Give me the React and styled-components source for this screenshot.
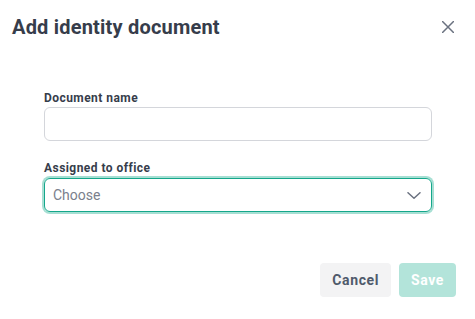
import React from "react";
import styled, { createGlobalStyle } from "styled-components";

const Global = createGlobalStyle`
  html, body { margin: 0; padding: 0; background: #ffffff; }
  body { font-family: Roboto, "Noto Sans", Arial, sans-serif; }
  * { box-sizing: border-box; }
`;

const Modal = styled.div`
  width: 475px;
  height: 319px;
  background: #ffffff;
  display: flex;
  flex-direction: column;
`;

const Header = styled.div`
  display: flex;
  align-items: center;
  justify-content: space-between;
  padding: 13px 21px 0 12px;
`;

const Title = styled.h2`
  margin: 0;
  font-size: 20px;
  line-height: 28px;
  font-weight: 700;
  letter-spacing: 0.2px;
  color: #363d4b;
`;

const CloseButton = styled.button`
  width: 12px;
  height: 12px;
  padding: 0;
  border: 0;
  background: none;
  display: flex;
  color: #6b7280;
  cursor: pointer;
`;

const Body = styled.div`
  display: flex;
  flex-direction: column;
  gap: 19px;
  padding: 0 43px 0 44px;
  margin-top: 49px;
`;

const Field = styled.div`
  display: flex;
  flex-direction: column;
`;

const Label = styled.label`
  font-size: 12px;
  line-height: 16px;
  font-weight: 700;
  letter-spacing: 0.45px;
  color: #363d4b;
  margin-bottom: ${(p) => (p.$focused ? "2px" : "1px")};
`;

const Input = styled.input`
  height: 34px;
  width: 100%;
  border: 1px solid #d4d6db;
  border-radius: 6px;
  padding: 0 8px;
  font-family: inherit;
  font-size: 14px;
  outline: none;
`;

const Select = styled.div`
  height: 34px;
  border: 1px solid #14a78b;
  border-radius: 6px;
  box-shadow: 0 0 0 2px #a6dfd3;
  display: flex;
  align-items: center;
  justify-content: space-between;
  padding: 0 10px 0 8px;
  font-size: 14px;
  color: #7a808c;
`;

const Footer = styled.div`
  display: flex;
  justify-content: flex-end;
  gap: 8px;
  padding-right: 19px;
  margin-top: 51px;
`;

const Button = styled.button`
  height: 34px;
  padding: 0 12px;
  border: 0;
  border-radius: 4px;
  font-family: inherit;
  font-size: 14px;
  font-weight: 700;
  letter-spacing: 0.6px;
  background: ${(p) => (p.$primary ? "#b3e4da" : "#f3f3f4")};
  color: ${(p) => (p.$primary ? "#ffffff" : "#4f5a6b")};
  cursor: pointer;
`;

export default function App() {
  return (
    <>
      <Global />
      <Modal>
        <Header>
          <Title>Add identity document</Title>
          <CloseButton aria-label="Close">
            <svg width="12" height="12" viewBox="0 0 12 12" fill="none">
              <path d="M0.5 0.5L11.5 11.5M11.5 0.5L0.5 11.5" stroke="currentColor" strokeWidth="1.5" strokeLinecap="round" />
            </svg>
          </CloseButton>
        </Header>
        <Body>
          <Field>
            <Label>Document name</Label>
            <Input type="text" />
          </Field>
          <Field>
            <Label $focused>Assigned to office</Label>
            <Select>
              <span>Choose</span>
              <svg width="14" height="7" viewBox="0 0 14 7" fill="none">
                <path d="M1 0.75L7 6.25L13 0.75" stroke="#6b7280" strokeWidth="1.5" strokeLinecap="round" strokeLinejoin="round" />
              </svg>
            </Select>
          </Field>
        </Body>
        <Footer>
          <Button>Cancel</Button>
          <Button $primary>Save</Button>
        </Footer>
      </Modal>
    </>
  );
}
